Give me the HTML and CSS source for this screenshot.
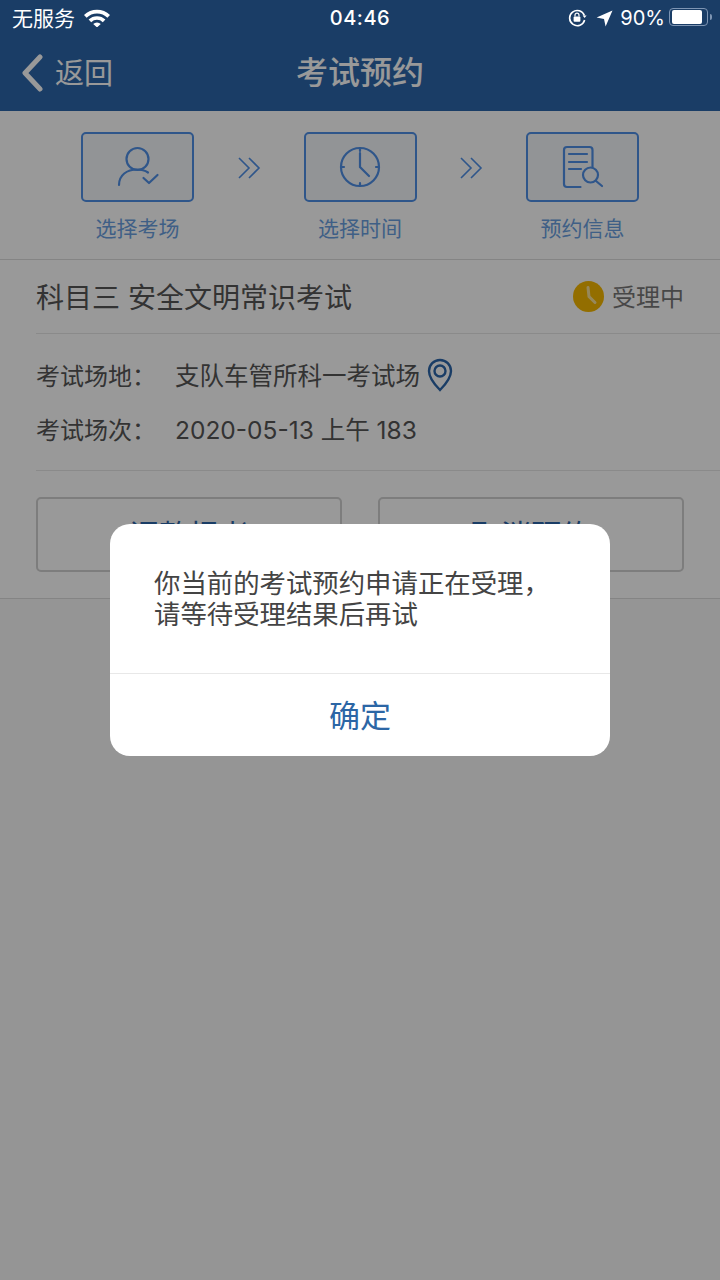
FILE: index.html
```html
<!DOCTYPE html>
<html lang="zh-CN">
<head>
    <meta charset="UTF-8">
    <meta name="viewport" content="width=device-width, initial-scale=1.0">
    <title>考试预约</title>
    <link rel="stylesheet" href="styles.css">
</head>
<body>

<div class="status-bar">
    <div class="status-left">
        <span>无服务</span>
        <svg width="26" height="18" viewBox="0 0 26 18"><path d="M0 6a18.5 18.5 0 0 1 26 0l-2.6 2.7a14.8 14.8 0 0 0-20.8 0z M4.6 10.6a12 12 0 0 1 16.8 0l-2.6 2.6a8.2 8.2 0 0 0-11.6 0z M9.2 15a5.4 5.4 0 0 1 7.6 0L13 18.4z" fill="#fff"/></svg>
    </div>
    <div class="status-time">04:46</div>
    <div class="status-right">
        <svg class="icon-lock" width="20" height="18" viewBox="0 0 20 18"><path d="M16.4 6.5A7.6 7.6 0 1 0 16.6 11" fill="none" stroke="#fff" stroke-width="1.6"/><path d="M14.6 6.5h4l-2 2.6z" fill="#fff"/><rect x="5.6" y="7.6" width="6.8" height="5.2" rx="1" fill="#fff"/><path d="M7 7.6V6.2a2 2 0 0 1 4 0v1.4" fill="none" stroke="#fff" stroke-width="1.2"/></svg>
        <svg class="icon-location" width="17" height="17" viewBox="0 0 17 17"><path d="M16.5.5 9.6 16.5 8 9 .6 7.4z" fill="#fff"/></svg>
        <span>90%</span>
        <div class="battery"><div class="battery-fill"></div></div>
    </div>
</div>

<div class="nav-bar">
    <div class="nav-back">
        <svg width="24" height="38" viewBox="0 0 24 38"><path d="M20 3 5 19l15 16" fill="none" stroke="#fff" stroke-width="5" stroke-linecap="round" stroke-linejoin="round"/></svg>
        <span>返回</span>
    </div>
    <div class="nav-title">考试预约</div>
</div>

<div class="steps">
    <div class="step">
        <div class="step-box">
            <svg width="44" height="44" viewBox="0 0 44 44" fill="none" stroke="#4f8fe6" stroke-width="2.2" stroke-linecap="round" stroke-linejoin="round"><circle cx="21.5" cy="14" r="11"/><path d="M3 40c0-10 8-15.5 18-15.5 4.5 0 8 1 11 3"/><path d="M27.5 33l5.5 5 8.5-8"/></svg>
        </div>
        <div class="step-label">选择考场</div>
    </div>
    <svg class="step-arrow" width="24" height="24" viewBox="0 0 24 24" fill="none" stroke="#4f8fe6" stroke-width="1.6"><path d="M2 2l10 10L2 22"/><path d="M12 2l10 10-10 10"/></svg>
    <div class="step">
        <div class="step-box">
            <svg width="44" height="44" viewBox="0 0 44 44" fill="none" stroke="#4f8fe6" stroke-width="2.2" stroke-linecap="round"><circle cx="22" cy="22" r="19"/><path d="M22 8v14l9 9"/><path d="M22 3v3M22 38v3M3 22h3M38 22h3"/></svg>
        </div>
        <div class="step-label">选择时间</div>
    </div>
    <svg class="step-arrow" width="24" height="24" viewBox="0 0 24 24" fill="none" stroke="#4f8fe6" stroke-width="1.6"><path d="M2 2l10 10L2 22"/><path d="M12 2l10 10-10 10"/></svg>
    <div class="step">
        <div class="step-box">
            <svg width="44" height="44" viewBox="0 0 44 44" fill="none" stroke="#4f8fe6" stroke-width="2.2" stroke-linecap="round" stroke-linejoin="round"><path d="M19.5 42H6a3 3 0 0 1-3-3V5a3 3 0 0 1 3-3h22.5a3 3 0 0 1 3 3v17"/><path d="M8 9h18M8 17h18M8 24h12"/><circle cx="29.5" cy="30" r="7.5"/><path d="M35 36l6 5"/></svg>
        </div>
        <div class="step-label">预约信息</div>
    </div>
</div>

<div class="card">
    <div class="card-head">
        <div class="card-title">科目三 安全文明常识考试</div>
        <div class="state">
            <svg width="31" height="31" viewBox="0 0 31 31"><circle cx="15.5" cy="15.5" r="15.5" fill="#f5b800"/><path d="M15 6.5l1 9 6 6" fill="none" stroke="#fff" stroke-opacity=".6" stroke-width="3" stroke-linecap="round"/></svg>
            <span>受理中</span>
        </div>
    </div>
    <div class="card-info">
        <div class="info-row">
            <span class="info-label">考试场地：</span>
            <span>支队车管所科一考试场</span>
            <svg width="26" height="34" viewBox="0 0 26 34" fill="none" stroke="#2c66aa" stroke-width="2.4"><path d="M13 32C7 26 2 20 2 13a11 11 0 0 1 22 0c0 7-5 13-11 19z"/><circle cx="13" cy="13" r="5.5"/></svg>
        </div>
        <div class="info-row">
            <span class="info-label">考试场次：</span>
            <span>2020-05-13 上午 183</span>
        </div>
    </div>
    <div class="card-actions">
        <div class="action">调整报考</div>
        <div class="action">取消预约</div>
    </div>
</div>

<div class="overlay">
    <div class="dialog">
        <div class="dialog-text">你当前的考试预约申请正在受理，<br>请等待受理结果后再试</div>
        <div class="dialog-btn">确定</div>
    </div>
</div>

</body>
</html>
```

FILE: styles.css
```css
html, body {
    margin: 0;
    height: 100%;
}
body {
    position: relative;
    width: 720px;
    height: 1280px;
    overflow: hidden;
    font-family: "Inter", "Noto Sans CJK SC", sans-serif;
    background-color: #f8f8f8;
    color: #555;
}
.status-bar {
    position: absolute;
    top: 0;
    left: 0;
    right: 0;
    z-index: 3;
    height: 36px;
    display: flex;
    align-items: center;
    justify-content: space-between;
    padding: 0 12px;
    color: #fff;
    font-size: 21px;
}
.status-left {
    display: flex;
    align-items: center;
    gap: 9px;
    width: 200px;
}
.status-left span {
    margin-top: -3px;
}
.status-time {
    font-weight: 500;
    font-size: 20px;
    letter-spacing: 0.5px;
}
.status-right {
    display: flex;
    align-items: center;
    justify-content: flex-end;
    gap: 4px;
    width: 200px;
    font-size: 20px;
}
.icon-lock {
    margin-right: 4px;
}
.icon-location {
    margin-right: 3px;
}
.battery {
    position: relative;
    width: 39px;
    height: 18px;
    margin-top: -2px;
    padding: 1px 2px;
    border: 1px solid #7e95b3;
    border-radius: 4px;
    box-sizing: border-box;
}
.battery:after {
    content: "";
    position: absolute;
    right: -5px;
    top: 5px;
    width: 2px;
    height: 6px;
    background-color: #7e95b3;
    border-radius: 0 2px 2px 0;
}
.battery-fill {
    width: 30px;
    height: 14px;
    background-color: #fff;
    border-radius: 2px;
}
.nav-bar {
    height: 75px;
    padding-top: 36px;
    display: flex;
    align-items: center;
    justify-content: center;
    position: relative;
    background-color: #2c66aa;
    color: #fff;
}
.nav-back {
    position: absolute;
    left: 20px;
    top: 53px;
    display: flex;
    align-items: center;
    gap: 11px;
    font-size: 29px;
}
.nav-back span {
    margin-top: -3px;
}
.nav-title {
    font-size: 32px;
    font-weight: 500;
    margin-top: -8px;
}
.steps {
    height: 149px;
    display: flex;
    justify-content: center;
    align-items: flex-start;
    padding-top: 21px;
    box-sizing: border-box;
    gap: 42.75px;
    border-bottom: 1px solid #ddd;
    background-color: #fff;
}
.step {
    width: 113px;
    display: flex;
    flex-direction: column;
    align-items: center;
}
.step-box {
    width: 113px;
    height: 70px;
    box-sizing: border-box;
    border: 2px solid #4f8fe6;
    border-radius: 5px;
    background-color: #f4f7fb;
    display: flex;
    align-items: center;
    justify-content: center;
}
.step-label {
    margin-top: 14px;
    font-size: 21px;
    line-height: 26px;
    color: #6a9fdf;
    white-space: nowrap;
}
.step-arrow {
    margin-top: 24px;
}
.card {
    height: 339px;
    box-sizing: border-box;
    padding-left: 36px;
    border-bottom: 1px solid #ddd;
    background-color: #fff;
}
.card-head {
    height: 74px;
    box-sizing: border-box;
    padding-right: 36px;
    display: flex;
    align-items: center;
    justify-content: space-between;
    border-bottom: 1px solid #e6e6e6;
}
.card-title {
    font-size: 28px;
    margin-top: -2px;
}
.state {
    display: flex;
    align-items: center;
    gap: 8px;
    font-size: 24px;
    color: #777;
}
.state span {
    margin-top: -2px;
}
.card-info {
    height: 137px;
    box-sizing: border-box;
    padding-top: 13.5px;
    border-bottom: 1px solid #e6e6e6;
}
.info-row {
    height: 54px;
    display: flex;
    align-items: center;
    font-size: 24.5px;
}
.info-label {
    width: 139px;
    flex-shrink: 0;
    font-size: 24px;
}
.info-row svg {
    margin-left: 7px;
}
.card-actions {
    display: flex;
    gap: 36px;
    padding: 26px 36px 0 0;
}
.action {
    flex: 1;
    height: 75px;
    box-sizing: border-box;
    padding-bottom: 4px;
    border: 2px solid #d0d0d0;
    border-radius: 5px;
    display: flex;
    align-items: center;
    justify-content: center;
    font-size: 30px;
    color: #2c66aa;
}
.overlay {
    position: absolute;
    top: 0;
    left: 0;
    right: 0;
    bottom: 0;
    z-index: 2;
    background-color: rgba(0, 0, 0, 0.4);
}
.dialog {
    position: absolute;
    top: 524px;
    left: 110px;
    width: 500px;
    height: 232px;
    background-color: #fff;
    border-radius: 20px;
    display: flex;
    flex-direction: column;
}
.dialog-text {
    height: 150px;
    box-sizing: border-box;
    padding: 44px 44px 0;
    font-size: 26.4px;
    line-height: 31px;
    color: #444;
    border-bottom: 1px solid #e8e8e8;
}
.dialog-btn {
    flex: 1;
    display: flex;
    align-items: center;
    justify-content: center;
    font-size: 31px;
    color: #2c66a5;
    padding-bottom: 4px;
}
```
